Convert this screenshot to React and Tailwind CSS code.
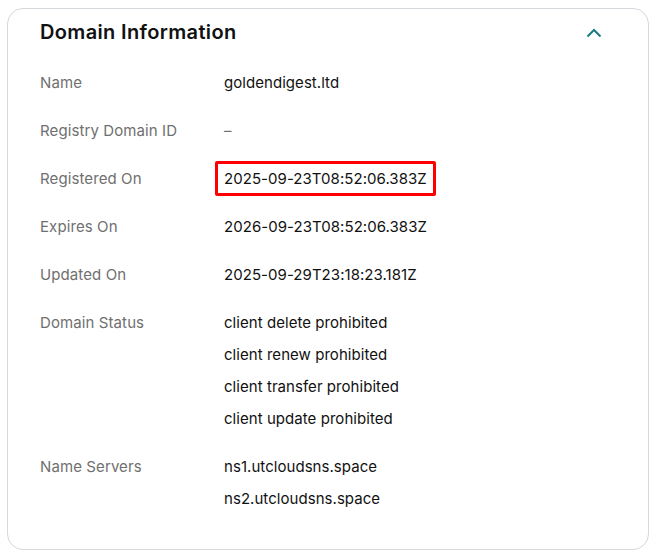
import React from "react";

const rows = [
  { label: "Name", values: ["goldendigest.ltd"] },
  { label: "Registry Domain ID", values: ["–"], muted: true },
  { label: "Registered On", values: ["2025-09-23T08:52:06.383Z"], boxed: true },
  { label: "Expires On", values: ["2026-09-23T08:52:06.383Z"] },
  { label: "Updated On", values: ["2025-09-29T23:18:23.181Z"] },
  {
    label: "Domain Status",
    values: [
      "client delete prohibited",
      "client renew prohibited",
      "client transfer prohibited",
      "client update prohibited",
    ],
  },
  { label: "Name Servers", values: ["ns1.utcloudsns.space", "ns2.utcloudsns.space"] },
];

export default function App() {
  return (
    <div className="w-[659px] h-[557px] bg-white pt-2 pl-[7px]" style={{ fontFamily: "Inter, 'Noto Sans', sans-serif" }}>
      <div className="w-[642px] h-[542px] border border-[#d4d9dd] rounded-[16px] px-8 pt-[9px]">
        <div className="flex items-center justify-between h-7">
          <h2 className="text-[20px] leading-7 font-semibold text-[#111111] tracking-[0.35px]">Domain Information</h2>
          <svg width="16" height="10" viewBox="0 0 16 10" className="mr-[14px] mt-[1px]">
            <path d="M1.5 8.5 L8 2 L14.5 8.5" fill="none" stroke="#1b7a80" strokeWidth="2" />
          </svg>
        </div>
        <div className="mt-[25px] flex flex-col gap-6">
          {rows.map((r) => (
            <div key={r.label} className="flex text-[15px] leading-6">
              <div className="w-[184px] text-[#6f6f6f] tracking-[0.1px]">{r.label}</div>
              <div className="flex flex-col gap-2 text-[#111111] tracking-[0.05px]">
                {r.values.map((v) => (
                  <div key={v} className={r.muted ? "text-[#6f6f6f]" : ""}>
                    {r.boxed ? (
                      <span className="relative inline-block">
                        {v}
                        <span className="absolute -left-[9px] -right-[9px] -top-[6px] -bottom-[5px] border-[3px] border-[#ff0000] rounded-[2px]" />
                      </span>
                    ) : (
                      v
                    )}
                  </div>
                ))}
              </div>
            </div>
          ))}
        </div>
      </div>
    </div>
  );
}
